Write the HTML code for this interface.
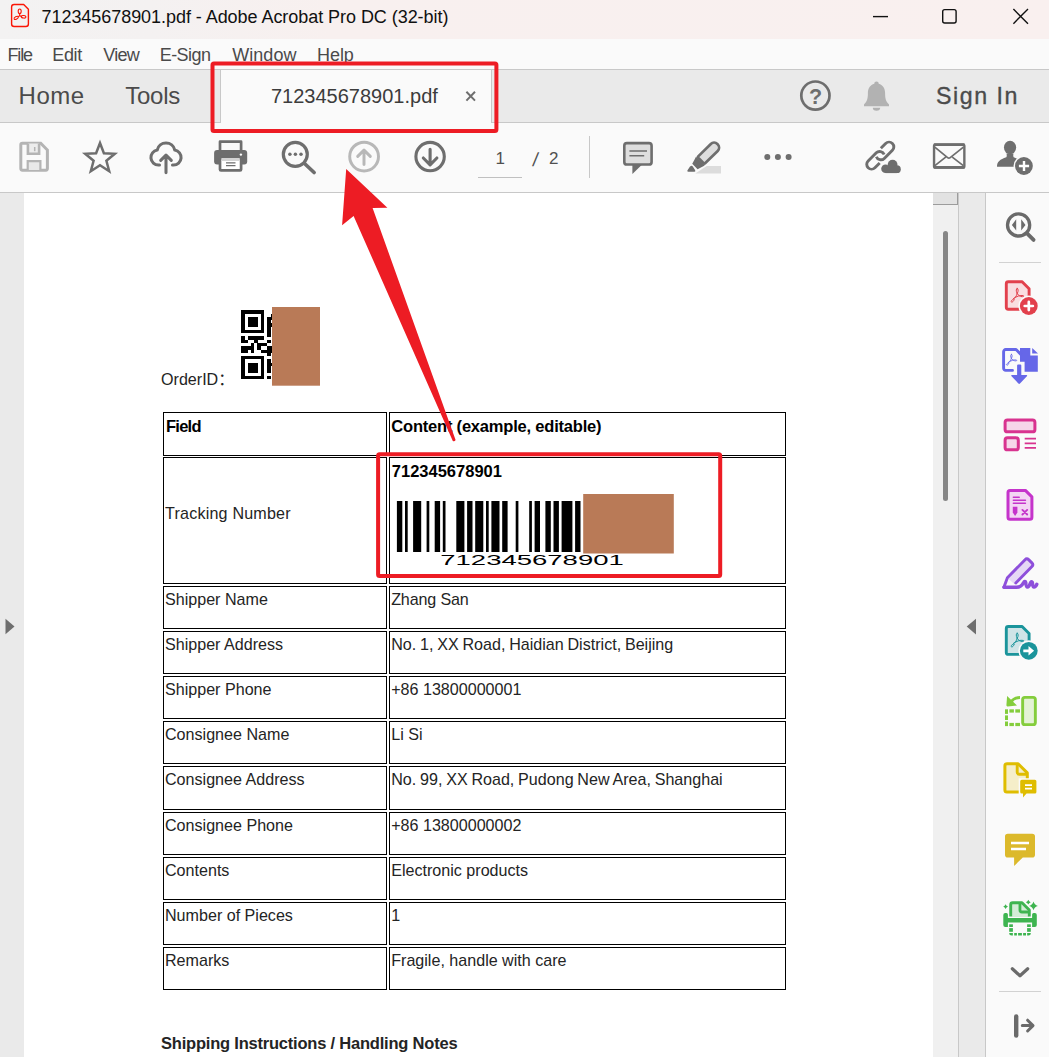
<!DOCTYPE html>
<html lang="en"><head><meta charset="utf-8"><title>712345678901.pdf - Adobe Acrobat Pro DC (32-bit)</title>
<style>
html,body{margin:0;padding:0}
body{width:1049px;height:1057px;position:relative;overflow:hidden;background:#fff;font-family:"Liberation Sans","Noto Sans CJK SC",sans-serif;color:#000}
div,svg,span{position:absolute;box-sizing:content-box}
.ui{font-family:"Liberation Sans",sans-serif;white-space:nowrap;line-height:1}
.c{border:1px solid #000;background:transparent}
.t{font-family:"Liberation Sans","Noto Sans CJK SC",sans-serif;font-size:16.1px;line-height:23px;white-space:nowrap;color:#242424;padding-top:1.5px}
.b{font-family:"Liberation Sans",sans-serif;font-weight:700;font-size:16.5px;line-height:19px;white-space:nowrap;color:#000;padding-top:5.2px}
</style></head><body>
<!-- title bar -->
<div style="left:0;top:0;width:1049px;height:39px;background:linear-gradient(90deg,#f3f2f2 0px,#f4f1f1 150px,#f8f0ef 330px,#f9f0ef 1049px)"></div>
<!-- menu bar -->
<div style="left:0;top:39px;width:1049px;height:30px;background:#fafafa"></div>
<div style="left:0;top:69px;width:1049px;height:1px;background:#c8c8c8"></div>
<!-- tab bar -->
<div style="left:0;top:70px;width:1049px;height:52px;background:#eaeaea"></div>
<div style="left:0;top:122px;width:1049px;height:1px;background:#c8c8c8"></div>
<!-- toolbar -->
<div style="left:0;top:123px;width:1049px;height:69px;background:#fafafa"></div>
<div style="left:0;top:192px;width:1049px;height:1px;background:#c8c8c8"></div>
<!-- active tab -->
<div style="left:220px;top:70px;width:270px;height:53px;background:#fafafa;border-left:1px solid #c8c8c8;border-right:1px solid #c8c8c8"></div>
<!-- doc area -->
<div style="left:0;top:193px;width:24px;height:864px;background:#eaeaea"></div>
<div style="left:24px;top:193px;width:909px;height:864px;background:#fff"></div>
<!-- scrollbar -->
<div style="left:933px;top:193px;width:25px;height:864px;background:#f0f0f0"></div>
<div style="left:933px;top:193px;width:24px;height:11px;background:#e2e2e2;border-bottom:1px solid #9c9c9c;border-right:1px solid #9c9c9c"></div>
<div style="left:943px;top:231px;width:5px;height:270px;background:#868686;border-radius:2.5px"></div>
<!-- splitter -->
<div style="left:958px;top:193px;width:26px;height:864px;background:#eaeaea;border-left:1px solid #c8c8c8;border-right:1px solid #c8c8c8"></div>
<!-- right panel -->
<div style="left:986px;top:193px;width:63px;height:864px;background:#fafafa"></div>

<!-- UI text -->
<div class="ui" id="title" style="left:41.5px;top:7.7px;font-size:18px;color:#111;letter-spacing:-0.05px">712345678901.pdf - Adobe Acrobat Pro DC (32-bit)</div>
<div class="ui mi" style="left:7.4px;top:45.6px;font-size:18px;color:#4a4a4a;letter-spacing:-1.1px">File</div>
<div class="ui mi" style="left:52.2px;top:45.6px;font-size:18px;color:#4a4a4a;letter-spacing:-0.3px">Edit</div>
<div class="ui mi" style="left:103.2px;top:45.6px;font-size:18px;color:#4a4a4a;letter-spacing:-0.7px">View</div>
<div class="ui mi" style="left:159.7px;top:45.6px;font-size:18px;color:#4a4a4a;letter-spacing:-0.55px">E-Sign</div>
<div class="ui mi" style="left:232.2px;top:45.6px;font-size:18px;color:#4a4a4a;letter-spacing:0.05px">Window</div>
<div class="ui mi" style="left:317px;top:45.6px;font-size:18px;color:#4a4a4a;letter-spacing:-0.05px">Help</div>
<div class="ui" style="left:18.5px;top:83.7px;font-size:24px;color:#4b4b4b;letter-spacing:0.55px">Home</div>
<div class="ui" style="left:125.2px;top:83.7px;font-size:24px;color:#4b4b4b;letter-spacing:-0.25px">Tools</div>
<div class="ui" style="left:271px;top:85.9px;font-size:20px;color:#3c3c3c">712345678901.pdf</div>
<div class="ui" style="left:936px;top:85.3px;font-size:23.2px;color:#4b4b4b;letter-spacing:1.55px;-webkit-text-stroke:0.35px #4b4b4b">Sign In</div>
<div class="ui" style="left:495.5px;top:149.5px;font-size:17px;color:#505050">1</div>
<div class="ui" style="left:533.2px;top:149.5px;font-size:19px;color:#505050;transform:skewX(-8deg)">/</div>
<div class="ui" style="left:549px;top:149.5px;font-size:17px;color:#505050">2</div>
<div style="left:478px;top:177px;width:44px;height:1px;background:#c0c0c0"></div>
<div style="left:589px;top:136px;width:1px;height:42px;background:#c8c8c8"></div>
<div style="left:999px;top:262px;width:42px;height:1px;background:#d2d2d2"></div>
<div style="left:999px;top:991px;width:42px;height:1px;background:#d2d2d2"></div>

<!-- document contents -->
<div class="t" style="left:161px;top:366.7px">OrderID：</div>
<div class="c" style="left:163px;top:412px;width:222px;height:42px"></div><div class="c" style="left:389px;top:412px;width:395px;height:42px"></div><div class="c" style="left:163px;top:457px;width:222px;height:125px"></div><div class="c" style="left:389px;top:457px;width:395px;height:125px"></div><div class="c" style="left:163px;top:586px;width:222px;height:41px"></div><div class="c" style="left:389px;top:586px;width:395px;height:41px"></div><div class="c" style="left:163px;top:631px;width:222px;height:41px"></div><div class="c" style="left:389px;top:631px;width:395px;height:41px"></div><div class="c" style="left:163px;top:676px;width:222px;height:41px"></div><div class="c" style="left:389px;top:676px;width:395px;height:41px"></div><div class="c" style="left:163px;top:721px;width:222px;height:41px"></div><div class="c" style="left:389px;top:721px;width:395px;height:41px"></div><div class="c" style="left:163px;top:766px;width:222px;height:42px"></div><div class="c" style="left:389px;top:766px;width:395px;height:42px"></div><div class="c" style="left:163px;top:812px;width:222px;height:41px"></div><div class="c" style="left:389px;top:812px;width:395px;height:41px"></div><div class="c" style="left:163px;top:857px;width:222px;height:41px"></div><div class="c" style="left:389px;top:857px;width:395px;height:41px"></div><div class="c" style="left:163px;top:902px;width:222px;height:41px"></div><div class="c" style="left:389px;top:902px;width:395px;height:41px"></div><div class="c" style="left:163px;top:947px;width:222px;height:41px"></div><div class="c" style="left:389px;top:947px;width:395px;height:41px"></div>
<div class="b" style="left:166.0px;top:412px;letter-spacing:-0.75px">Field</div><div class="b" style="left:391.3px;top:412px;letter-spacing:-0.2px">Content (example, editable)</div><div class="b" style="left:391.8px;top:457px;">712345678901</div><div class="t" style="left:165.0px;top:500.7px;letter-spacing:0.2px">Tracking Number</div><div class="t" style="left:165.0px;top:586px;">Shipper Name</div><div class="t" style="left:391.2px;top:586px;letter-spacing:-0.15px">Zhang San</div><div class="t" style="left:165.0px;top:631px;">Shipper Address</div><div class="t" style="left:391.2px;top:631px;word-spacing:-0.7px">No. 1, XX Road, Haidian District, Beijing</div><div class="t" style="left:165.0px;top:676px;">Shipper Phone</div><div class="t" style="left:391.2px;top:676px;">+86 13800000001</div><div class="t" style="left:165.0px;top:721px;">Consignee Name</div><div class="t" style="left:391.2px;top:721px;">Li Si</div><div class="t" style="left:165.0px;top:766px;">Consignee Address</div><div class="t" style="left:391.2px;top:766px;word-spacing:-0.7px">No. 99, XX Road, Pudong New Area, Shanghai</div><div class="t" style="left:165.0px;top:812px;">Consignee Phone</div><div class="t" style="left:391.2px;top:812px;">+86 13800000002</div><div class="t" style="left:165.0px;top:857px;">Contents</div><div class="t" style="left:391.2px;top:857px;">Electronic products</div><div class="t" style="left:165.0px;top:902px;">Number of Pieces</div><div class="t" style="left:391.2px;top:902px;">1</div><div class="t" style="left:165.0px;top:947px;">Remarks</div><div class="t" style="left:391.2px;top:947px;">Fragile, handle with care</div>
<div class="t" style="left:161px;top:1030.5px;font-weight:700;font-size:16.5px;letter-spacing:-0.21px">Shipping Instructions / Handling Notes</div>

<svg id="art" width="1049" height="1057" viewBox="0 0 1049 1057" style="left:0;top:0">
 <g fill="#000" shape-rendering="crispEdges"><rect x="241.15" y="310.30" width="3.42" height="3.42"/><rect x="244.42" y="310.30" width="3.42" height="3.42"/><rect x="247.68" y="310.30" width="3.42" height="3.42"/><rect x="250.95" y="310.30" width="3.42" height="3.42"/><rect x="254.22" y="310.30" width="3.42" height="3.42"/><rect x="257.49" y="310.30" width="3.42" height="3.42"/><rect x="260.75" y="310.30" width="3.42" height="3.42"/><rect x="241.15" y="313.57" width="3.42" height="3.42"/><rect x="260.75" y="313.57" width="3.42" height="3.42"/><rect x="270.55" y="313.57" width="3.42" height="3.42"/><rect x="241.15" y="316.83" width="3.42" height="3.42"/><rect x="247.68" y="316.83" width="3.42" height="3.42"/><rect x="250.95" y="316.83" width="3.42" height="3.42"/><rect x="254.22" y="316.83" width="3.42" height="3.42"/><rect x="260.75" y="316.83" width="3.42" height="3.42"/><rect x="267.29" y="316.83" width="3.42" height="3.42"/><rect x="270.55" y="316.83" width="3.42" height="3.42"/><rect x="241.15" y="320.10" width="3.42" height="3.42"/><rect x="247.68" y="320.10" width="3.42" height="3.42"/><rect x="250.95" y="320.10" width="3.42" height="3.42"/><rect x="254.22" y="320.10" width="3.42" height="3.42"/><rect x="260.75" y="320.10" width="3.42" height="3.42"/><rect x="267.29" y="320.10" width="3.42" height="3.42"/><rect x="241.15" y="323.37" width="3.42" height="3.42"/><rect x="247.68" y="323.37" width="3.42" height="3.42"/><rect x="250.95" y="323.37" width="3.42" height="3.42"/><rect x="254.22" y="323.37" width="3.42" height="3.42"/><rect x="260.75" y="323.37" width="3.42" height="3.42"/><rect x="267.29" y="323.37" width="3.42" height="3.42"/><rect x="270.55" y="323.37" width="3.42" height="3.42"/><rect x="241.15" y="326.63" width="3.42" height="3.42"/><rect x="260.75" y="326.63" width="3.42" height="3.42"/><rect x="267.29" y="326.63" width="3.42" height="3.42"/><rect x="241.15" y="329.90" width="3.42" height="3.42"/><rect x="244.42" y="329.90" width="3.42" height="3.42"/><rect x="247.68" y="329.90" width="3.42" height="3.42"/><rect x="250.95" y="329.90" width="3.42" height="3.42"/><rect x="254.22" y="329.90" width="3.42" height="3.42"/><rect x="257.49" y="329.90" width="3.42" height="3.42"/><rect x="260.75" y="329.90" width="3.42" height="3.42"/><rect x="267.29" y="329.90" width="3.42" height="3.42"/><rect x="267.29" y="333.17" width="3.42" height="3.42"/><rect x="241.15" y="336.44" width="3.42" height="3.42"/><rect x="247.68" y="336.44" width="3.42" height="3.42"/><rect x="250.95" y="336.44" width="3.42" height="3.42"/><rect x="254.22" y="336.44" width="3.42" height="3.42"/><rect x="257.49" y="336.44" width="3.42" height="3.42"/><rect x="260.75" y="336.44" width="3.42" height="3.42"/><rect x="241.15" y="339.70" width="3.42" height="3.42"/><rect x="244.42" y="339.70" width="3.42" height="3.42"/><rect x="254.22" y="339.70" width="3.42" height="3.42"/><rect x="267.29" y="339.70" width="3.42" height="3.42"/><rect x="250.95" y="342.97" width="3.42" height="3.42"/><rect x="257.49" y="342.97" width="3.42" height="3.42"/><rect x="260.75" y="342.97" width="3.42" height="3.42"/><rect x="264.02" y="342.97" width="3.42" height="3.42"/><rect x="241.15" y="346.24" width="3.42" height="3.42"/><rect x="244.42" y="346.24" width="3.42" height="3.42"/><rect x="247.68" y="346.24" width="3.42" height="3.42"/><rect x="250.95" y="346.24" width="3.42" height="3.42"/><rect x="257.49" y="346.24" width="3.42" height="3.42"/><rect x="267.29" y="346.24" width="3.42" height="3.42"/><rect x="270.55" y="346.24" width="3.42" height="3.42"/><rect x="241.15" y="349.50" width="3.42" height="3.42"/><rect x="244.42" y="349.50" width="3.42" height="3.42"/><rect x="250.95" y="349.50" width="3.42" height="3.42"/><rect x="260.75" y="349.50" width="3.42" height="3.42"/><rect x="264.02" y="349.50" width="3.42" height="3.42"/><rect x="267.29" y="349.50" width="3.42" height="3.42"/><rect x="270.55" y="349.50" width="3.42" height="3.42"/><rect x="267.29" y="352.77" width="3.42" height="3.42"/><rect x="241.15" y="356.04" width="3.42" height="3.42"/><rect x="244.42" y="356.04" width="3.42" height="3.42"/><rect x="247.68" y="356.04" width="3.42" height="3.42"/><rect x="250.95" y="356.04" width="3.42" height="3.42"/><rect x="254.22" y="356.04" width="3.42" height="3.42"/><rect x="257.49" y="356.04" width="3.42" height="3.42"/><rect x="260.75" y="356.04" width="3.42" height="3.42"/><rect x="241.15" y="359.31" width="3.42" height="3.42"/><rect x="260.75" y="359.31" width="3.42" height="3.42"/><rect x="267.29" y="359.31" width="3.42" height="3.42"/><rect x="241.15" y="362.57" width="3.42" height="3.42"/><rect x="247.68" y="362.57" width="3.42" height="3.42"/><rect x="250.95" y="362.57" width="3.42" height="3.42"/><rect x="254.22" y="362.57" width="3.42" height="3.42"/><rect x="260.75" y="362.57" width="3.42" height="3.42"/><rect x="267.29" y="362.57" width="3.42" height="3.42"/><rect x="270.55" y="362.57" width="3.42" height="3.42"/><rect x="241.15" y="365.84" width="3.42" height="3.42"/><rect x="247.68" y="365.84" width="3.42" height="3.42"/><rect x="250.95" y="365.84" width="3.42" height="3.42"/><rect x="254.22" y="365.84" width="3.42" height="3.42"/><rect x="260.75" y="365.84" width="3.42" height="3.42"/><rect x="267.29" y="365.84" width="3.42" height="3.42"/><rect x="241.15" y="369.11" width="3.42" height="3.42"/><rect x="247.68" y="369.11" width="3.42" height="3.42"/><rect x="250.95" y="369.11" width="3.42" height="3.42"/><rect x="254.22" y="369.11" width="3.42" height="3.42"/><rect x="260.75" y="369.11" width="3.42" height="3.42"/><rect x="267.29" y="369.11" width="3.42" height="3.42"/><rect x="241.15" y="372.37" width="3.42" height="3.42"/><rect x="260.75" y="372.37" width="3.42" height="3.42"/><rect x="241.15" y="375.64" width="3.42" height="3.42"/><rect x="244.42" y="375.64" width="3.42" height="3.42"/><rect x="247.68" y="375.64" width="3.42" height="3.42"/><rect x="250.95" y="375.64" width="3.42" height="3.42"/><rect x="254.22" y="375.64" width="3.42" height="3.42"/><rect x="257.49" y="375.64" width="3.42" height="3.42"/><rect x="260.75" y="375.64" width="3.42" height="3.42"/><rect x="267.29" y="375.64" width="3.42" height="3.42"/></g>
 <rect x="272" y="307" width="48" height="78.7" fill="#b97a57"/>
 <g fill="#000"><rect x="396.90" y="501" width="5.40" height="51"/><rect x="405.00" y="501" width="2.70" height="51"/><rect x="413.10" y="501" width="8.10" height="51"/><rect x="426.60" y="501" width="2.70" height="51"/><rect x="434.70" y="501" width="5.40" height="51"/><rect x="442.80" y="501" width="2.70" height="51"/><rect x="456.30" y="501" width="8.10" height="51"/><rect x="467.10" y="501" width="5.40" height="51"/><rect x="475.20" y="501" width="8.10" height="51"/><rect x="486.00" y="501" width="2.70" height="51"/><rect x="491.40" y="501" width="8.10" height="51"/><rect x="502.20" y="501" width="5.40" height="51"/><rect x="515.70" y="501" width="2.70" height="51"/><rect x="529.20" y="501" width="2.70" height="51"/><rect x="534.60" y="501" width="5.40" height="51"/><rect x="545.40" y="501" width="5.40" height="51"/><rect x="553.50" y="501" width="5.40" height="51"/><rect x="561.60" y="501" width="10.80" height="51"/><rect x="575.10" y="501" width="5.40" height="51"/><rect x="585.90" y="501" width="5.40" height="51"/><rect x="594.00" y="501" width="5.40" height="51"/><rect x="604.80" y="501" width="2.70" height="51"/><rect x="610.20" y="501" width="8.10" height="51"/><rect x="626.40" y="501" width="5.40" height="51"/><rect x="634.50" y="501" width="5.40" height="51"/><rect x="648.00" y="501" width="8.10" height="51"/><rect x="658.80" y="501" width="2.70" height="51"/><rect x="664.20" y="501" width="5.40" height="51"/></g>
 <text x="440.3" y="565" font-family="Liberation Sans, sans-serif" font-size="14.6" textLength="183.5" lengthAdjust="spacingAndGlyphs" fill="#000">712345678901</text>
 <rect x="583.2" y="494" width="90.6" height="59.5" fill="#b97a57"/>
 <!-- red annotations -->
 <rect x="212.5" y="63.5" width="283.9" height="67.4" rx="1.5" fill="none" stroke="#ed1c24" stroke-width="4"/>
 <rect x="378.1" y="454.2" width="342.1" height="121.8" rx="1.5" fill="none" stroke="#ed1c24" stroke-width="4"/>
 <path d="M346.2 169.1 L387.4 207.7 L372.6 208 L455.6 440 Q454.6 442 452.8 441 L353.6 215.9 L342.1 225.2 Z" fill="#ed1c24"/>
</svg>
<svg id="icons" width="1049" height="1057" viewBox="0 0 1049 1057" style="left:0;top:0">
<!-- title bar: pdf icon -->
<path d="M14.100 4.500h9.600l4.700 4.700v14.800a2.500 2.500 0 0 1-2.500 2.500H14.100a2.500 2.500 0 0 1-2.500-2.500V7a2.500 2.500 0 0 1 2.500-2.500z" fill="none" stroke="#fa1505" stroke-width="1.400" stroke-linejoin="round"/>
<g fill="none" stroke="#fa1505" stroke-width="1.100">
<ellipse cx="19.700" cy="11.300" rx="1.500" ry="2.300"/>
<ellipse cx="23.600" cy="16.800" rx="2.300" ry="1.250" transform="rotate(8 23.600 16.800)"/>
<ellipse cx="16.200" cy="17.900" rx="2.300" ry="1.250" transform="rotate(-28 16.200 17.900)"/>
<path d="M19.700 13.600l-.1 2l1.800.9M19.600 15.600l-1.500 1.300"/>
</g>
<!-- window controls -->
<g stroke="#111" fill="none" stroke-width="1.4">
<path d="M873 16.6h15"/>
<rect x="942.7" y="9.6" width="13.4" height="13.4" rx="2"/>
<path d="M1013.4 9.1l14.6 14.6M1028 9.1l-14.6 14.6"/>
</g>
<!-- tab close x -->
<path d="M466.4 91.8l8.6 8.8M475 91.8l-8.6 8.8" stroke="#6e6e6e" stroke-width="2" fill="none"/>
<!-- help -->
<circle cx="815.4" cy="95.6" r="14.1" fill="none" stroke="#6e6e6e" stroke-width="2.700"/>
<text x="815.500" y="103.800" text-anchor="middle" font-family="Liberation Sans, sans-serif" font-weight="700" font-size="21.500" fill="#6e6e6e">?</text>
<!-- bell -->
<path d="M876.5 81.6c1.3 0 2.2.9 2.2 2.1c4 1.2 6.4 4.600 6.400 9.200c0 5.500.8 8.500 3.900 11.500v1.800h-25v-1.800c3.100-3 3.900-6 3.900-11.500c0-4.600 2.400-8 6.400-9.200c0-1.200.9-2.100 2.200-2.100z" fill="#b2b2b2"/>
<path d="M872.8 107.800h7.400a3.700 2.900 0 0 1-7.400 0z" fill="#b2b2b2"/>
<!-- save (disabled) -->
<g stroke="#b4b4b4" fill="none">
<path d="M22.400 143.300H40.700L47.400 150V168.600a1.600 1.600 0 0 1-1.600 1.600H22.400a1.600 1.600 0 0 1-1.600-1.600V144.900a1.600 1.600 0 0 1 1.600-1.600z" stroke-width="3"/>
<path d="M27.900 143.500v10.300h11.200V143.500" fill="#ececec" stroke-width="2.600"/>
<path d="M27.700 170V161.200h12.700V170" fill="#e9e9e9" stroke-width="2.200"/>
<path d="M34.700 147v4.200" stroke-width="1.500"/>
</g>
<!-- star -->
<polygon points="100.0,143.0 103.9,153.2 114.8,153.8 106.4,160.7 109.2,171.2 100.0,165.3 90.8,171.2 93.6,160.7 85.2,153.8 96.1,153.2" fill="none" stroke="#6e6e6e" stroke-width="2.500" stroke-linejoin="miter"/>
<!-- cloud upload -->
<g stroke="#6e6e6e" fill="none" stroke-width="3.050" stroke-linecap="round" stroke-linejoin="round">
<path d="M159.500 165H158.500A7.500 7.500 0 0 1 157.200 150.100A9 9 0 0 1 174.800 150.100A7.500 7.500 0 0 1 173.500 165H172.500"/>
<path d="M166 172.600V155.200M160.700 160.400L166 155.100L171.300 160.400"/>
</g>
<!-- printer -->
<g>
<path d="M220 151V141.700h21.100V151" fill="#fafafa" stroke="#6e6e6e" stroke-width="2.700" stroke-linejoin="round"/>
<rect x="214.100" y="150" width="33.100" height="14.600" rx="3" fill="#6e6e6e"/>
<rect x="220" y="158.200" width="21.100" height="12.200" rx="1" fill="#fff" stroke="#6e6e6e" stroke-width="2.700"/>
<rect x="221.400" y="158" width="18.300" height="3" fill="#d4d4d4"/>
<path d="M226 162.800h9.500M226 165.600h9.500" stroke="#6e6e6e" stroke-width="1.300"/>
<circle cx="240.900" cy="154.600" r="1.200" fill="#fff"/>
</g>
<!-- search dots -->
<g stroke="#6e6e6e" fill="none">
<circle cx="295.300" cy="154.300" r="12" stroke-width="3.200"/>
<path d="M304.500 163.500L314.100 172.500" stroke-width="3.700" stroke-linecap="round"/>
</g>
<g fill="#6e6e6e"><circle cx="289.900" cy="154.200" r="1.750"/><circle cx="295.400" cy="154.200" r="1.750"/><circle cx="301" cy="154.200" r="1.750"/></g>
<!-- up (disabled) -->
<g stroke="#b8b8b8" fill="none" stroke-width="2.950" stroke-linecap="round" stroke-linejoin="round">
<circle cx="364.100" cy="156.600" r="14.400"/>
<path d="M364 164.400V150.300M357.700 156.400L364 150.100L370.300 156.400"/>
</g>
<!-- down -->
<g stroke="#6e6e6e" fill="none" stroke-width="3.100" stroke-linecap="round" stroke-linejoin="round">
<circle cx="430.100" cy="156.600" r="14.200"/>
<path d="M430.100 149.200V164.400M423.300 158L430.100 164.800L436.900 158"/>
</g>
<!-- comment -->
<path d="M632.400 164.500v9.400l9.800-9.400z" fill="#6e6e6e"/>
<rect x="624.300" y="143.100" width="27.300" height="21.400" rx="2.600" fill="#dedede" stroke="#6e6e6e" stroke-width="2.600"/>
<path d="M629.400 151h17.600M629.400 155.700h14.800" stroke="#6e6e6e" stroke-width="1.500"/>
<!-- highlighter -->
<path d="M706.700 166H721V173.600H695.300z" fill="#dcdcdc"/>
<g transform="translate(700 161.450) rotate(-44.500)">
<path d="M2.300 -4.900H20A4.600 4.600 0 0 1 24.600 -0.300V0.300A4.600 4.600 0 0 1 20 4.900H2.300A1 1 0 0 1 1.300 3.900V-3.900A1 1 0 0 1 2.300 -4.900z" fill="#dedede" stroke="#6e6e6e" stroke-width="2.700"/>
<path d="M0.500 -6.250L-2.500 -5.200L-7.150 -3.800V3.800L-2.500 5.200L0.500 6.250z" fill="#6e6e6e"/>
</g>
<path d="M691 165.900Q692 165.500 692.800 166.500L695.200 170.200Q695.800 171.700 694.200 171.700H688.200Q686.700 171.500 687.500 170.200L690 166.500Q690.400 166 691 165.900z" fill="#6e6e6e"/>
<!-- more dots -->
<g fill="#6e6e6e"><circle cx="767.300" cy="157" r="3"/><circle cx="777.900" cy="157" r="3"/><circle cx="788.600" cy="157" r="3"/></g>
<!-- link + cloud -->
<g stroke="#6e6e6e" fill="none" stroke-width="2.900">
<g transform="translate(884.950 150.950) rotate(-45)"><path d="M-1 -4.800H5.750A4.800 4.800 0 0 1 5.750 4.800H-5.750A4.800 4.800 0 0 1 -10.100 -2"/></g>
<g transform="translate(875.600 160.300) rotate(-45)"><path d="M1 4.800H-5.750A4.800 4.800 0 0 1 -5.750 -4.800H5.750A4.800 4.800 0 0 1 10.100 2"/></g>
</g>
<g stroke="#fafafa" stroke-width="2.400" fill="#fafafa"><circle cx="892.600" cy="164.700" r="4.900"/><circle cx="885.500" cy="168.800" r="4.300"/><circle cx="896.900" cy="169.200" r="3.900"/><rect x="885.500" y="167" width="11.400" height="6.100"/></g>
<g fill="#6e6e6e"><circle cx="892.600" cy="164.700" r="4.900"/><circle cx="885.500" cy="168.800" r="4.300"/><circle cx="896.900" cy="169.200" r="3.900"/><rect x="885.500" y="167" width="11.400" height="6.100"/></g>
<!-- envelope -->
<g stroke="#6e6e6e" fill="none" stroke-linejoin="round">
<rect x="934.050" y="144.600" width="30.300" height="22.900" rx="1.300" stroke-width="2.400"/>
<path d="M933.800 144.650h30.800M933.800 167.450h30.800" stroke-width="2.700"/>
<path d="M934.800 147.100L947.600 157.600Q948.900 158.700 950.200 157.600L963.400 147.100M934.900 165.700L945.700 157.100M963.300 165.700L952.300 157.100" stroke-width="1.700"/>
</g>
<!-- user plus -->
<g fill="#6e6e6e">
<ellipse cx="1010.050" cy="147.500" rx="6.100" ry="6.700"/>
<path d="M997 166.700c0-5.300 3-7.200 9.300-9.500c.6-.8.600-2.200.1-3.700h7.200c-.5 1.500-.5 2.900.1 3.700c6.300 2.300 9.300 4.200 9.300 9.500z"/>
<circle cx="1023.900" cy="166" r="10.400" fill="#fafafa"/>
<circle cx="1023.900" cy="166" r="8.900"/>
<path d="M1018.900 166h10.200M1024 161v10" stroke="#fff" stroke-width="2.400" fill="none"/>
</g>
<!-- side triangles -->
<path d="M5.500 618.800V634.200L14.500 626.500z" fill="#6e6e6e"/>
<path d="M976 618.800V634.400L966.700 626.600z" fill="#6e6e6e"/>
</svg>
<svg id="icons2" width="1049" height="1057" viewBox="0 0 1049 1057" style="left:0;top:0">
<!-- right panel: search -->
<g stroke="#6a6a6a" fill="none">
<circle cx="1018.600" cy="224.900" r="11.100" stroke-width="3.300"/>
<path d="M1027.300 233.600L1033.600 239.900" stroke-width="3.800" stroke-linecap="round"/>
</g>
<path d="M1011.900 224.900L1016.200 219.300V230.500zM1025.500 224.900L1021.200 219.300V230.500z" fill="#6a6a6a"/>
<!-- create pdf -->
<path d="M1008.300 281.700h13.800l7 7v18.500a2 2 0 0 1-2 2h-18.800a2 2 0 0 1-2-2v-23.500a2 2 0 0 1 2-2z" fill="#f9dde0" stroke="#e2404c" stroke-width="2.900" stroke-linejoin="round"/>
<g fill="none" stroke="#e2404c" stroke-width="1" stroke-linejoin="round" stroke-linecap="round"><path d="M1017.200 288.400c-1.300 0-1.300 2.700 0 5.300c1.300-2.600 1.300-5.300 0-5.300z"/><path d="M1017.200 293.700c-0.800 2.500-2.500 4.700-4.300 5.800c-1.600 0.900-2.400 2.100-1.400 2.500c1.100 0.400 2.100-0.900 2.700-2.400"/><path d="M1017.200 293.700c1.200 1.700 3 2.900 5.200 3c1.500 0.100 2-0.800 0.700-1.100c-2.600-0.600-6.600 0.700-9.600 2.900"/></g>
<circle cx="1028.800" cy="306" r="10.500" fill="#fafafa"/>
<circle cx="1028.800" cy="306" r="8.900" fill="#e2404c"/>
<path d="M1024.700 306h8.200M1028.800 301.900v8.200" stroke="#fff" stroke-width="2.700" stroke-linecap="round"/>
<!-- combine files -->
<g fill="#6667e8">
<path d="M1020 348.100h10.300v7.300h7.500v16.400h-13.200v-10.100h-4.600z"/>
<path d="M1032.200 348.100l5.800 5.400h-5.800z"/>
<path d="M1020.600 354.100l-4.550-4.550h-10.350a2.100 2.100 0 0 0-2.100 2.100v16.650a2.100 2.100 0 0 0 2.100 2.100h6.800" fill="none" stroke="#6667e8" stroke-width="2.900" stroke-linecap="round" stroke-linejoin="round"/>
<path d="M1017.100 365.400a1 1 0 0 1 1-1h2.200a1 1 0 0 1 1 1v9.700h5.400a0.500 0.500 0 0 1 .4.800l-7.100 7.600a1.100 1.100 0 0 1-1.600 0l-7.100-7.600a0.500 0.500 0 0 1 .4-.800h5.400z"/>
</g>
<g fill="none" stroke="#6667e8" stroke-width="0.900" stroke-linecap="round" stroke-linejoin="round">
<path d="M1011.400 354.300c-1 0-1 2.100 0 4.200c1-2.100 1-4.200 0-4.200z"/>
<path d="M1011.400 358.500c-.7 2-2 3.700-3.500 4.600c-1.300.7-1.900 1.600-1.100 2c.9.300 1.700-.7 2.100-1.900"/>
<path d="M1011.400 358.500c1 1.400 2.400 2.300 4.200 2.400c1.200.1 1.600-.6.600-.9c-2.100-.5-5.300.6-7.700 2.300"/>
</g>
<!-- organize / edit layout (magenta) -->
<g stroke="#d8338f" fill="#f6d6e9">
<rect x="1005.100" y="419.900" width="29.800" height="11.900" rx="2.400" stroke-width="3"/>
<rect x="1005.100" y="437.800" width="13.200" height="12" rx="2.400" stroke-width="3"/>
<path d="M1024.700 438.600h11.300M1024.700 443.300h11.300M1024.700 447.900h11.300" stroke-width="1.700" fill="none"/>
</g>
<!-- request signatures -->
<g stroke="#c534cb" fill="none">
<path d="M1010 490.400h15.400l6.500 6.500v20.300a2 2 0 0 1-2 2h-19.900a2 2 0 0 1-2-2v-24.800a2 2 0 0 1 2-2z" fill="#f3d6f4" stroke-width="3" stroke-linejoin="round"/>
<path d="M1013.400 497.200h5.800M1013.400 500.300h12M1013.400 503.300h12" stroke-width="1.600" stroke-linecap="round"/>
<path d="M1022.400 509.900l4.800 4.600M1027.200 509.900l-4.800 4.600" stroke-width="1.900" stroke-linecap="round"/>
</g>
<path d="M1012.800 506.800h4.600v5.600l-2.300 3.500l-2.300-3.500z" fill="#c534cb"/>
<!-- fill & sign -->
<path d="M1008.300 578.700L1026.800 558.400L1033.300 564.600L1014.800 584.400z" fill="#e6d8f5"/>
<g stroke="#8e4fdb" fill="none" stroke-linejoin="round" stroke-linecap="round">
<path d="M1003.900 587.200L1007.400 577.800L1025.050 559.700Q1026.800 557.900 1028.600 559.650L1031.900 562.850Q1033.700 564.600 1031.950 566.400L1015.800 583" stroke-width="2.900"/>
<path d="M1003.900 587.200H1016.500C1020 587.200 1022.500 584.600 1023.600 582.400C1024.300 580.900 1025.700 581 1025.800 582.700C1025.900 584.900 1026 587.100 1027.600 587.100C1029.400 587.100 1029.800 583.600 1030.800 582.200C1031.500 581.300 1032.400 581.700 1032.500 582.900C1032.600 584.700 1032.700 587.100 1034 587.100C1035.400 587 1036.300 585.300 1036.800 584.200" stroke-width="3.400"/>
</g>
<!-- export pdf -->
<path d="M1008.300 626.500h13.800l7 7v18.900a2 2 0 0 1-2 2h-18.800a2 2 0 0 1-2-2v-23.900a2 2 0 0 1 2-2z" fill="#cfe4e7" stroke="#1a949b" stroke-width="2.900" stroke-linejoin="round"/>
<g fill="none" stroke="#1a949b" stroke-width="1" stroke-linejoin="round" stroke-linecap="round"><path d="M1017.200 633.200c-1.300 0-1.300 2.700 0 5.300c1.300-2.600 1.300-5.300 0-5.300z"/><path d="M1017.200 638.500c-0.800 2.500-2.500 4.700-4.300 5.800c-1.600 0.900-2.400 2.100-1.400 2.500c1.100 0.400 2.100-0.900 2.700-2.400"/><path d="M1017.200 638.500c1.200 1.700 3 2.900 5.200 3c1.500 0.100 2-0.800 0.700-1.100c-2.600-0.600-6.600 0.700-9.600 2.900"/></g>
<circle cx="1028.800" cy="650.800" r="10.500" fill="#fafafa"/>
<circle cx="1028.800" cy="650.800" r="8.900" fill="#1a949b"/>
<path d="M1023.300 649.400h5.200v-3.300l5.600 4.700l-5.600 4.700v-3.300h-5.200z" fill="#fff"/>
<!-- organize pages (green) -->
<rect x="1022.650" y="697.350" width="12.700" height="27.300" rx="2.200" fill="#e4f2d6" stroke="#84cd3c" stroke-width="2.900"/>
<g fill="#84cd3c">
<rect x="1005" y="709.300" width="3" height="4.600"/><rect x="1005" y="715.400" width="3" height="4.600"/><rect x="1005" y="721.500" width="3" height="4.600"/>
<rect x="1009.400" y="709.300" width="4.500" height="3.300"/><rect x="1015.300" y="709.300" width="4.700" height="3.300"/>
<rect x="1009.400" y="722.900" width="4.500" height="3.200"/><rect x="1015.300" y="722.900" width="4.700" height="3.200"/>
<path d="M1007.100 696.100L1006.400 705.300a1.100 1.100 0 0 0 1.200 1.100L1017 705.600z"/>
</g>
<path d="M1020 697.500c-4.200 0-7.200 1.600-9.300 4.800" fill="none" stroke="#84cd3c" stroke-width="2.900"/>
<!-- send for comments (yellow) -->
<g>
<path d="M1006.900 763.700h11.200l9.200 9.200v17a2 2 0 0 1-2 2h-18.400a2 2 0 0 1-2-2v-24.200a2 2 0 0 1 2-2z" fill="#f5eec9" stroke="#dfbd00" stroke-width="3" stroke-linejoin="round"/>
<path d="M1017.200 763.700v8.500a2 2 0 0 0 2 2h8.100" fill="none" stroke="#dfbd00" stroke-width="2.900"/>
<path d="M1018.700 778.300h19.200v16.600h-11l-4.600 4.500v-4.500h-3.600z" fill="#fafafa"/>
<path d="M1021.700 779.800h13.200a1.500 1.500 0 0 1 1.500 1.500v10.600a1.500 1.500 0 0 1-1.500 1.500h-8.400l-3.500 4v-4h-1.300a1.500 1.500 0 0 1-1.500-1.500v-10.600a1.500 1.500 0 0 1 1.500-1.500z" fill="#dfbd00"/>
<path d="M1025 785.100h7M1025 788.600h7" stroke="#fff" stroke-width="1.600"/>
</g>
<!-- comment (yellow) -->
<path d="M1007.800 833.700h24.400a2.800 2.800 0 0 1 2.800 2.800v18.200a2.800 2.800 0 0 1-2.800 2.800h-9.400l-8.700 8.400v-8.400h-6.300a2.800 2.800 0 0 1-2.800-2.800v-18.200a2.800 2.800 0 0 1 2.800-2.800z" fill="#dcb92b"/>
<path d="M1011 843.100h18M1011 849h15" stroke="#fff" stroke-width="2.500"/>
<!-- scan & ocr (green) -->
<g fill="#3eb450">
<path d="M1012 917V904.700a2 2 0 0 1 2-2h8l7.300 7.300v7" fill="#d3ecd6"/>
<path d="M1010.700 916.600V904.700a2 2 0 0 1 2-2h9.300l7.300 7.300v6.600" fill="none" stroke="#3eb450" stroke-width="2.900" stroke-linejoin="round"/>
<path d="M1019.950 902.700v7.300a2 2 0 0 0 2 2h7.300" fill="none" stroke="#3eb450" stroke-width="2.800"/>
<path d="M1005.300 913.100h1.100a1.500 1.500 0 0 1 1.500 1.500v3.300h24.200v-3.300a1.500 1.500 0 0 1 1.500-1.500h1.200a2 2 0 0 1 2 2v9.900a2 2 0 0 1-2 2h-2.700v-4.400h-24.200v4.400h-2.600a2 2 0 0 1-2-2v-9.900a2 2 0 0 1 2-2z"/>
<rect x="1009.200" y="924.300" width="3.700" height="2.700"/><rect x="1009.200" y="928.100" width="3.700" height="3.700"/>
<path d="M1009.200 933h3.700v2.500h-1.200a2.500 2.500 0 0 1-2.500-2.500z"/>
<rect x="1014.200" y="933" width="2.700" height="2.500"/><rect x="1018.100" y="933" width="3.800" height="2.500"/><rect x="1023.100" y="933" width="2.900" height="2.500"/>
<rect x="1027.100" y="924.300" width="3.700" height="2.700"/><rect x="1027.100" y="928.100" width="3.700" height="3.700"/>
<path d="M1027.100 933h3.700a2.500 2.500 0 0 1-2.500 2.500h-1.200z"/>
<path d="M1005.6 904.2Q1006.27 905.93 1008.0 906.6Q1006.27 907.27 1005.6 909.0Q1004.93 907.27 1003.2 906.6Q1004.93 905.93 1005.6 904.2z"/><path d="M1028.3 899.8000000000001Q1028.97 901.53 1030.7 902.2Q1028.97 902.87 1028.3 904.6Q1027.63 902.87 1025.8999999999999 902.2Q1027.63 901.53 1028.3 899.8000000000001z"/><path d="M1033.5 901.5Q1034.38 905.02 1037.9 905.9Q1034.38 906.78 1033.5 910.3Q1032.62 906.78 1029.1 905.9Q1032.62 905.02 1033.5 901.5z"/>
</g>
<!-- chevron -->
<path d="M1012.300 968.800l7.700 7l7.700-7" fill="none" stroke="#6a6a6a" stroke-width="3.200" stroke-linecap="round" stroke-linejoin="round"/>
<!-- collapse -->
<g stroke="#6a6a6a" fill="none" stroke-linecap="round" stroke-linejoin="round">
<path d="M1016.200 1016.500v19" stroke-width="4.400"/>
<path d="M1022.300 1025.600h10M1027.600 1020.200l5.400 5.400l-5.400 5.400" stroke-width="3"/>
</g>
</svg>

</body></html>
